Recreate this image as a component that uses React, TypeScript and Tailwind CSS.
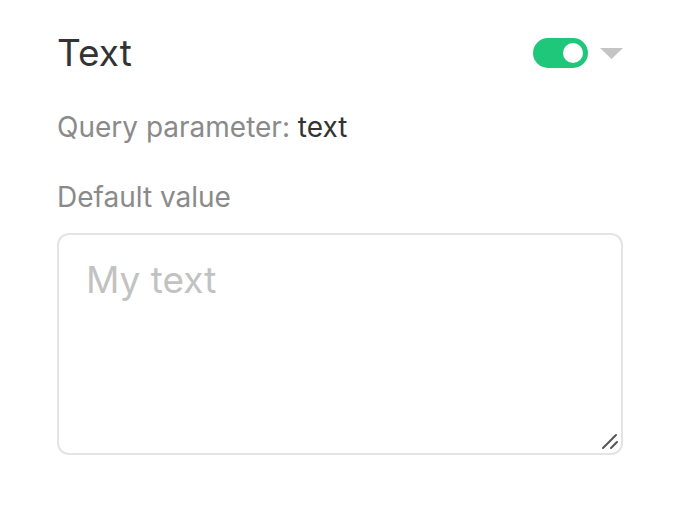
import { useState } from 'react'

export default function App() {
  const [enabled, setEnabled] = useState(true)

  return (
    <div className="min-h-[512px] w-[680px] bg-white font-['Inter','Liberation_Sans',sans-serif]">
      <div className="mx-auto w-[566px] pt-[29px]">
        {/* Header */}
        <div className="flex items-center justify-between">
          <h1 className="text-[37px] leading-[48px] font-normal text-[#333333]">Text</h1>
          <div className="flex items-center gap-[12px]">
            <button
              onClick={() => setEnabled(!enabled)}
              aria-label="Toggle parameter"
              className={`flex h-[30px] w-[55px] items-center rounded-full px-[5px] ${enabled ? 'justify-end bg-[#1fc77a]' : 'justify-start bg-[#d4d4d4]'}`}
            >
              <span className="h-[20px] w-[20px] rounded-full bg-white" />
            </button>
            <svg width="23" height="11" viewBox="0 0 23 11" aria-hidden="true">
              <path d="M0 0 L23 0 L11.5 11 Z" fill="#c4c4c4" />
            </svg>
          </div>
        </div>

        <p className="mt-[32px] text-[28px] leading-[36px] text-[#8a8a8a]">
          Query parameter: <span className="text-[#333333]">text</span>
        </p>

        <label className="mt-[34px] block text-[28px] leading-[36px] text-[#8a8a8a]">Default value</label>

        {/* Textarea */}
        <div className="relative mt-[18px]">
          <textarea
            placeholder="My text"
            className="block h-[222px] w-full resize-none rounded-[12px] border-2 border-[#e4e4e4] px-[27px] pt-[21px] pb-[13px] text-[37px] leading-[48px] text-[#333333] outline-none placeholder:text-[#c2c2c2]"
          />
          <svg
            className="absolute right-[4px] bottom-[5px]"
            width="18"
            height="18"
            viewBox="0 0 18 18"
            aria-hidden="true"
          >
            <path d="M2 16 L15 3 M10 16 L16 10" stroke="#555555" strokeWidth="2" strokeLinecap="round" />
          </svg>
        </div>
      </div>
    </div>
  )
}
